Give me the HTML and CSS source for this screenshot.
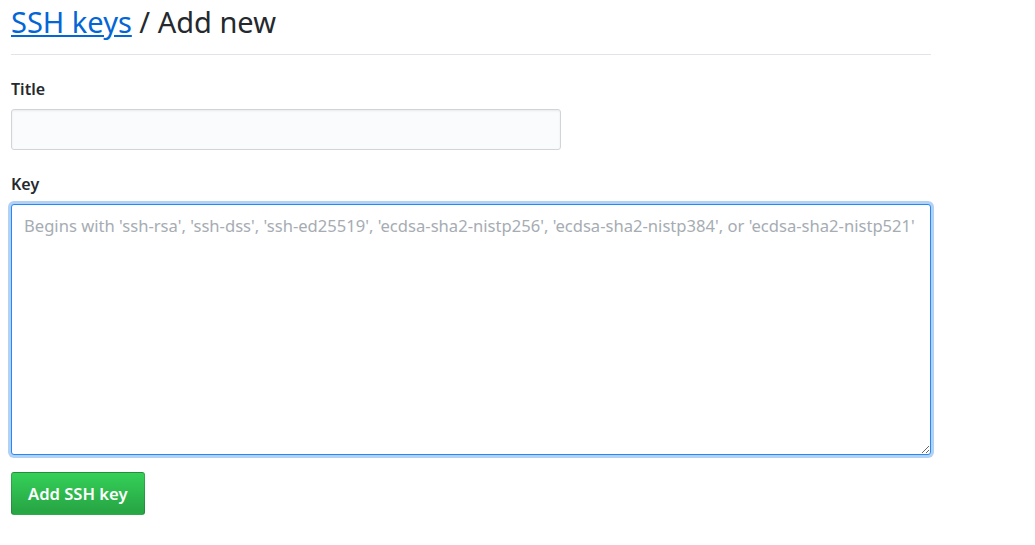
FILE: index.html
```html
<!DOCTYPE html>
<html lang="en">
<head>
  <meta charset="UTF-8" />
  <meta name="viewport" content="width=device-width, initial-scale=1" />
  <title>Add new SSH key</title>
  <link rel="stylesheet" href="styles.css">
</head>
<body>

<div class="page">
  <h2 class="subhead"><a href="#">SSH keys</a> / Add new</h2>

  <form class="key-form" autocomplete="off">
    <div class="field">
      <label for="title">Title</label>
      <input type="text" id="title" class="input-title" />
    </div>
    <div class="field">
      <label for="key">Key</label>
      <textarea id="key" class="input-key" placeholder="Begins with 'ssh-rsa', 'ssh-dss', 'ssh-ed25519', 'ecdsa-sha2-nistp256', 'ecdsa-sha2-nistp384', or 'ecdsa-sha2-nistp521'"></textarea>
    </div>
    <button type="button" class="btn-primary">Add SSH key</button>
  </form>
</div>

</body>
</html>
```

FILE: styles.css
```css
body {
  font-family: 'Noto Sans', 'Open Sans', sans-serif;
  color: #24292e;
  background: #fff;
  margin: 0;
  padding: 0 0 0 11px;
  font-size: 14px;
}
.page {
  width: 920px;
}
.subhead {
  font-size: 29px;
  font-weight: normal;
  margin: 0;
  padding: 4px 0 14px;
  border-bottom: 1px solid #e1e4e8;
  line-height: 36px;
}
.subhead a {
  color: #0366d6;
}
.key-form {
  padding-top: 24px;
}
.field {
  margin-bottom: 24px;
}
.field label {
  display: block;
  font-weight: 600;
  font-size: 16px;
  line-height: 20px;
  margin-bottom: 10px;
}
.input-title {
  display: block;
  box-sizing: border-box;
  width: 550px;
  height: 41px;
  background: #fafbfc;
  border: 1px solid #d1d5da;
  border-radius: 3px;
  box-shadow: inset 0 1px 2px rgba(27,31,35,0.075);
  font: inherit;
  padding: 6px 8px;
}
.input-key {
  display: block;
  box-sizing: border-box;
  width: 920px;
  height: 251px;
  border: 1px solid #2188ff;
  border-radius: 3px;
  font: inherit;
  font-size: 16.6px;
  padding: 9px 12px;
  resize: vertical;
  outline: none;
  box-shadow: 0 0 0 3px rgba(3,102,214,0.3);
}
.input-key::placeholder {
  color: #a6acb3;
}
.key-form .field:last-of-type {
  margin-bottom: 17px;
}
.btn-primary {
  display: block;
  height: 43px;
  padding: 0 16px;
  font: inherit;
  font-size: 16.6px;
  font-weight: 600;
  color: #fff;
  background: linear-gradient(-180deg, #34d058 0%, #28a745 90%);
  border: 1px solid rgba(27,31,35,0.2);
  border-radius: 3px;
  cursor: pointer;
}
```
